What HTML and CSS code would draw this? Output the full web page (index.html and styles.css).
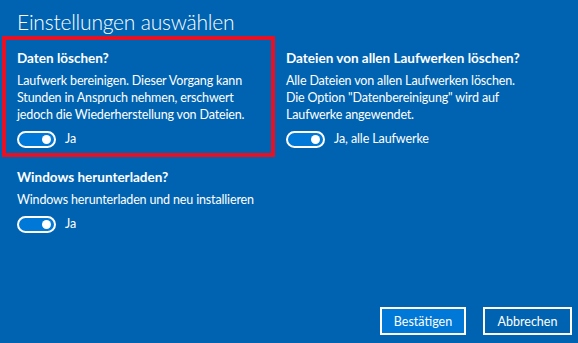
FILE: index.html
```html
<!DOCTYPE html>
<html lang="de">
<head>
    <meta charset="UTF-8">
    <title>Einstellungen auswählen</title>
    <link rel="stylesheet" href="styles.css">
</head>
<body>

<div class="dialog">
    <h1 class="title">Einstellungen auswählen</h1>

    <div class="options">
        <div class="option selected">
            <h2>Daten löschen?</h2>
            <p>Laufwerk bereinigen. Dieser Vorgang kann Stunden in Anspruch nehmen, erschwert jedoch die Wiederherstellung von Dateien.</p>
            <div class="switch-row">
                <span class="switch"><span class="knob"></span></span>
                <span>Ja</span>
            </div>
        </div>

        <div class="option right">
            <h2>Dateien von allen Laufwerken löschen?</h2>
            <p>Alle Dateien von allen Laufwerken löschen. Die Option "Datenbereinigung" wird auf Laufwerke angewendet.</p>
            <div class="switch-row">
                <span class="switch"><span class="knob"></span></span>
                <span>Ja, alle Laufwerke</span>
            </div>
        </div>

        <div class="option lower">
            <h2>Windows herunterladen?</h2>
            <p>Windows herunterladen und neu installieren</p>
            <div class="switch-row">
                <span class="switch"><span class="knob"></span></span>
                <span>Ja</span>
            </div>
        </div>
    </div>

    <div class="actions">
        <button class="btn primary">Bestätigen</button>
        <button class="btn">Abbrechen</button>
    </div>
</div>

</body>
</html>
```

FILE: styles.css
```css
body {
    margin: 0;
    padding: 0;
    width: 578px;
    height: 343px;
    overflow: hidden;
    background-color: #0063b1;
    color: #ffffff;
    font-family: "Lato", "Noto Sans", sans-serif;
}

.dialog {
    height: 343px;
    display: flex;
    flex-direction: column;
}

.title {
    margin: 0;
    padding: 8px 0 0 17px;
    font-size: 21px;
    font-weight: 300;
    letter-spacing: -0.2px;
    line-height: 27px;
}

.options {
    display: grid;
    grid-template-columns: 273px 273px;
    padding: 1px 0 0 2px;
}

.option {
    border: 4px solid transparent;
    padding: 10px 11px 5px 11px;
}

.option.selected {
    border-color: #e81123;
}

.option.right {
    border-left-width: 0;
    padding-left: 11px;
}

.option.lower {
    padding-top: 8px;
}

.option h2 {
    margin: 0;
    font-size: 13.5px;
    font-weight: 700;
    line-height: 17px;
}

.option p {
    margin: 5px 0 0 0;
    font-size: 12.5px;
    letter-spacing: -0.15px;
    line-height: 17px;
}

.switch-row {
    display: flex;
    align-items: center;
    gap: 9px;
    margin-top: 7px;
    font-size: 12.5px;
    letter-spacing: -0.1px;
    line-height: 18px;
}

.switch {
    box-sizing: border-box;
    width: 39px;
    height: 17px;
    border: 2px solid #ffffff;
    border-radius: 10px;
    background-color: #0078d7;
    display: flex;
    justify-content: flex-end;
    align-items: center;
    padding: 0 3px;
}

.knob {
    width: 9px;
    height: 9px;
    border-radius: 50%;
    background-color: #ffffff;
}

.actions {
    margin-top: auto;
    display: flex;
    justify-content: flex-end;
    gap: 17px;
    padding: 0 6px 8px 0;
}

.btn {
    height: 28px;
    border: 2px solid #ffffff;
    background-color: #0063b1;
    color: #ffffff;
    font-family: "Lato", "Noto Sans", sans-serif;
    font-size: 12.5px;
    padding: 0 6px;
}

.btn.primary {
    width: 86px;
    background-color: #0078d7;
}

.btn:not(.primary) {
    width: 89px;
}
```
